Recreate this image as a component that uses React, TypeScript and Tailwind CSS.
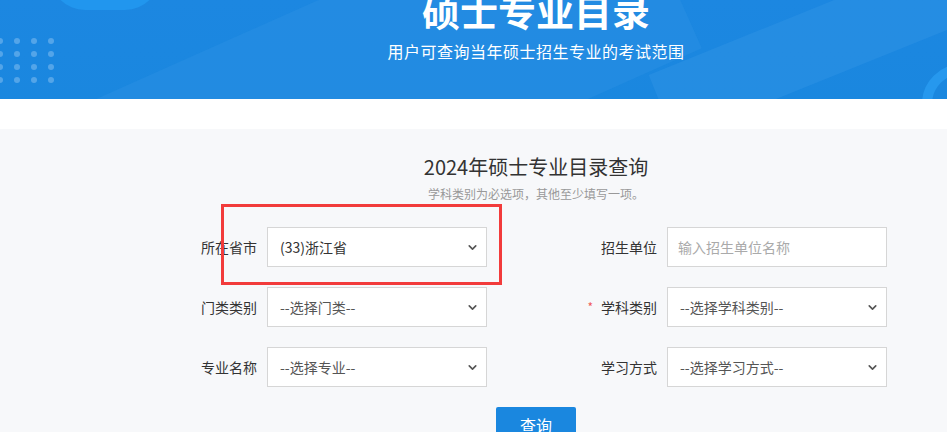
import { ChevronDown } from "lucide-react";

const font = { fontFamily: '"Noto Sans CJK SC", "Noto Sans", sans-serif' };

function Label({ text, required }: { text: string; required?: boolean }) {
  return (
    <div className="w-[80px] shrink-0 flex items-center justify-end text-[14px] text-[#333]">
      {required && <span className="mr-[8px] text-[12px] text-[#f05b5b]">*</span>}
      {text}
    </div>
  );
}

function Select({ value, muted }: { value: string; muted?: boolean }) {
  return (
    <div className="ml-[10px] flex h-[40px] w-[220px] items-center justify-between border border-[#d6d6d6] bg-white pl-[12px] pr-[7px]">
      <span className={muted ? "text-[14px] text-[#555]" : "text-[14px] text-[#333]"}>{value}</span>
      <ChevronDown className="h-[13px] w-[13px] text-[#555]" strokeWidth={3} />
    </div>
  );
}

function Row({ children }: { children: React.ReactNode }) {
  return <div className="flex h-[40px] items-stretch">{children}</div>;
}

export default function App() {
  return (
    <div className="w-full overflow-hidden bg-[#f7f8fa]" style={font}>
      <div className="relative w-[1072px]">
        <header className="relative h-[99px] overflow-hidden bg-gradient-to-b from-[#1c87e1] to-[#1a87df]">
          <div className="absolute left-[-200px] top-[40px] h-[200px] w-[900px] rotate-[-24deg] bg-[#2a8fe3] opacity-50" />
          <div className="absolute left-[640px] top-[-40px] h-[70px] w-[600px] rotate-[-22deg] bg-[#3595e5] opacity-40" />
          <div className="absolute left-[50px] top-[-60px] h-[70px] w-[110px] rounded-full bg-[#2196ee]" />
          <div className="absolute left-[922px] top-[64px] h-[80px] w-[80px] rounded-full border-[10px] border-[#2698ee]" />
          <div className="absolute left-[-3px] top-[38px] grid grid-cols-4 gap-x-[11px] gap-y-[7px] opacity-40">
            {Array.from({ length: 16 }).map((_, i) => (
              <span key={i} className="h-[6px] w-[6px] rounded-full bg-[#a8d2f7]" />
            ))}
          </div>
          <div className="relative flex flex-col items-center">
            <h1 className="mt-[-14px] text-[38px] font-bold leading-[48px] text-white">硕士专业目录</h1>
            <p className="mt-[6px] text-[16px] leading-[22px] tracking-[0.5px] text-white">用户可查询当年硕士招生专业的考试范围</p>
          </div>
        </header>
        <div className="h-[30px] bg-white" />
        <section className="pb-[20px] pt-[24px]">
          <h2 className="text-center text-[20px] leading-[28px] text-[#333]">2024年硕士专业目录查询</h2>
          <p className="mt-[4px] text-center text-[12px] leading-[18px] text-[#999]">学科类别为必选项，其他至少填写一项。</p>
          <div className="ml-[177px] mt-[24px] grid w-[710px] grid-cols-2 gap-x-[90px] gap-y-[20px]">
            <Row>
              <Label text="所在省市" />
              <Select value="(33)浙江省" />
            </Row>
            <Row>
              <Label text="招生单位" />
              <div className="ml-[10px] flex h-[40px] w-[220px] items-center border border-[#d6d6d6] bg-white px-[10px] text-[14px] text-[#aaa]">
                输入招生单位名称
              </div>
            </Row>
            <Row>
              <Label text="门类类别" />
              <Select value="--选择门类--" muted />
            </Row>
            <Row>
              <Label text="学科类别" required />
              <Select value="--选择学科类别--" muted />
            </Row>
            <Row>
              <Label text="专业名称" />
              <Select value="--选择专业--" muted />
            </Row>
            <Row>
              <Label text="学习方式" />
              <Select value="--选择学习方式--" muted />
            </Row>
          </div>
          <div className="mt-[20px] flex justify-center">
            <button className="h-[36px] w-[80px] rounded-[2px] bg-[#1a87df] text-[16px] text-white">查询</button>
          </div>
        </section>
        <div className="absolute left-[221px] top-[204px] h-[81px] w-[281px] border-[3px] border-[#f23b3b]" />
      </div>
    </div>
  );
}
